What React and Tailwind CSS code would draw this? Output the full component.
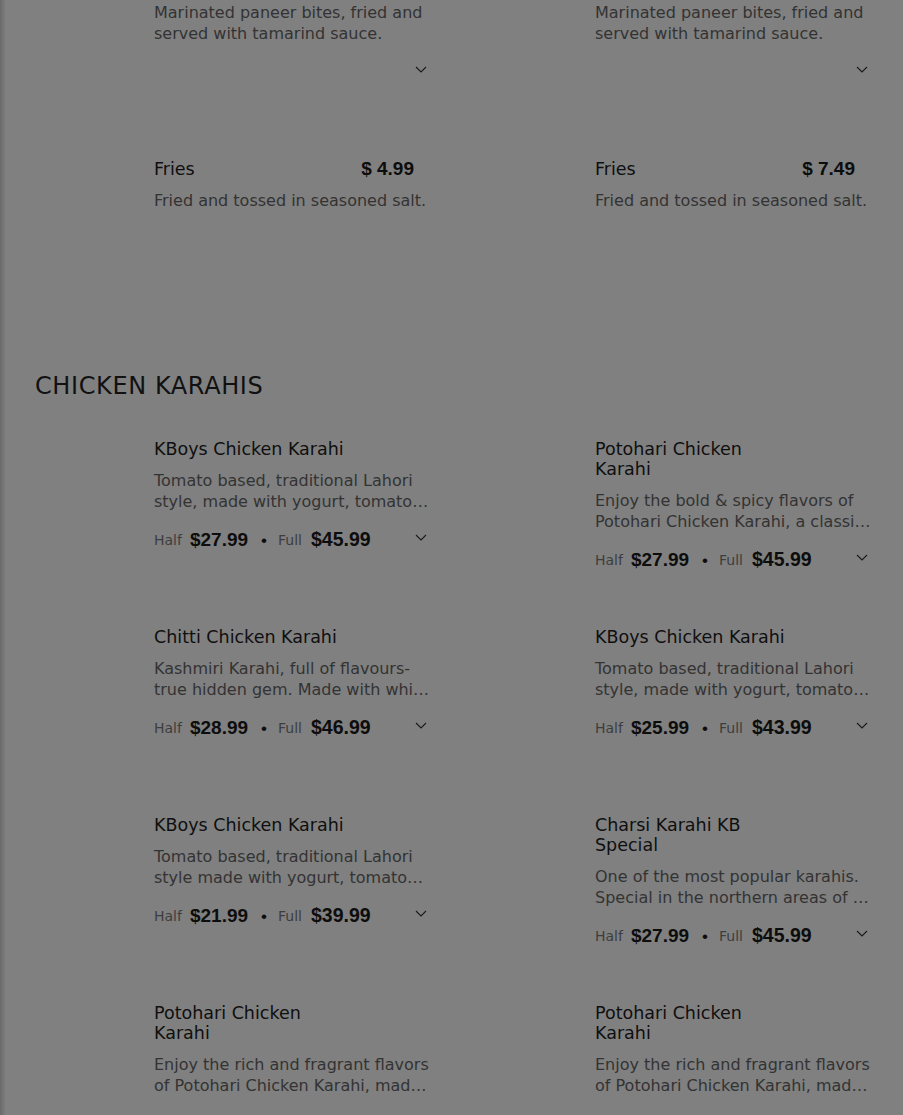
import React from 'react';

const font = { fontFamily: '"DejaVu Sans", "Noto Sans", sans-serif' };
const priceFont = { fontFamily: '"Liberation Sans", Arial, sans-serif' };

const karahis = [
  {
    name: 'KBoys Chicken Karahi',
    lines: ['Tomato based, traditional Lahori', 'style, made with yogurt, tomatoes, ginger and green chilies.'],
    half: '$27.99',
    full: '$45.99',
  },
  {
    name: 'Potohari Chicken Karahi',
    lines: ['Enjoy the bold & spicy flavors of', 'Potohari Chicken Karahi, a classic dish from the north.'],
    half: '$27.99',
    full: '$45.99',
  },
  {
    name: 'Chitti Chicken Karahi',
    lines: ['Kashmiri Karahi, full of flavours-', 'true hidden gem. Made with white pepper and cream.'],
    half: '$28.99',
    full: '$46.99',
  },
  {
    name: 'KBoys Chicken Karahi',
    lines: ['Tomato based, traditional Lahori', 'style, made with yogurt, tomatoes, ginger and green chilies.'],
    half: '$25.99',
    full: '$43.99',
  },
  {
    name: 'KBoys Chicken Karahi',
    lines: ['Tomato based, traditional Lahori', 'style made with yogurt, tomatoes, ginger and green chilies.'],
    half: '$21.99',
    full: '$39.99',
  },
  {
    name: 'Charsi Karahi KB Special',
    lines: ['One of the most popular karahis.', 'Special in the northern areas of Pakistan, cooked in lamb fat.'],
    half: '$27.99',
    full: '$45.99',
  },
  {
    name: 'Potohari Chicken Karahi',
    lines: ['Enjoy the rich and fragrant flavors', 'of Potohari Chicken Karahi, made with fresh spices.'],
    half: '$27.99',
    full: '$45.99',
  },
  {
    name: 'Potohari Chicken Karahi',
    lines: ['Enjoy the rich and fragrant flavors', 'of Potohari Chicken Karahi, made with fresh spices.'],
    half: '$27.99',
    full: '$45.99',
  },
];

const Chevron = () => (
  <svg width="12" height="7" viewBox="0 0 12 7" fill="none" className="shrink-0">
    <polyline points="1,1 6,6 11,1" stroke="#1a1a1a" strokeWidth="1.1" />
  </svg>
);

const Desc = ({ lines }) => (
  <div className="text-[16px] leading-[21px] text-[#333333] w-[276px]" style={font}>
    <div className="whitespace-nowrap">{lines[0]}</div>
    <div className="truncate">{lines[1]}</div>
  </div>
);

const PriceRow = ({ half, full }) => (
  <div className="flex items-center h-[24px] w-[276px] mt-[16px]">
    <span className="text-[14px] text-[#3d3d3d]" style={font}>Half</span>
    <span className="ml-[8px] text-[19px] font-bold text-[#0d0d0d]" style={priceFont}>{half}</span>
    <span className="ml-[13px] mr-[11px] text-[17px] leading-none text-[#0d0d0d]" style={priceFont}>•</span>
    <span className="text-[14px] text-[#3d3d3d]" style={font}>Full</span>
    <span className="ml-[9px] text-[19.5px] font-bold text-[#0d0d0d]" style={priceFont}>{full}</span>
    <div className="ml-auto -mt-[6px] pr-[3px]">
      <Chevron />
    </div>
  </div>
);

const Card = ({ children }) => (
  <div className="flex h-[188px]">
    <div className="w-[104px] shrink-0" />
    <div className="ml-[15px]">{children}</div>
  </div>
);

const Title = ({ name }) => (
  <div className="text-[17.5px] leading-[20px] font-medium text-[#0f0f0f] max-w-[200px] pt-[1px]" style={font}>
    {name}
  </div>
);

const KarahiCard = ({ item }) => (
  <Card>
    <Title name={item.name} />
    <div className="mt-[11px]">
      <Desc lines={item.lines} />
    </div>
    <PriceRow half={item.half} full={item.full} />
  </Card>
);

const FriesCard = ({ price }) => (
  <Card>
    <div className="flex justify-between items-center w-[260px] h-[20px] pt-[2px]">
      <span className="text-[17.5px] font-medium text-[#0f0f0f]" style={font}>Fries</span>
      <span className="text-[19px] font-bold text-[#0d0d0d]" style={priceFont}>{price}</span>
    </div>
    <div className="mt-[12px] text-[16px] leading-[21px] text-[#333333] whitespace-nowrap" style={font}>
      Fried and tossed in seasoned salt.
    </div>
  </Card>
);

const PaneerCard = () => (
  <Card>
    <Title name="Paneer Pakora" />
    <div className="mt-[11px]">
      <Desc lines={['Marinated paneer bites, fried and', 'served with tamarind sauce.']} />
    </div>
    <div className="flex items-center h-[24px] w-[276px] mt-[16px]">
      <div className="ml-auto -mt-[6px] pr-[3px]">
        <Chevron />
      </div>
    </div>
  </Card>
);

export default function App() {
  return (
    <div className="flex h-[1115px] w-[903px] overflow-hidden bg-[#808080]">
      <div className="w-[5px] shrink-0 bg-gradient-to-r from-[#6a6a6a] to-[#7c7c7c]" />
      <div className="flex-1 pl-[30px]">
        <div className="-mt-[30px] grid grid-cols-[441px_441px]">
          <PaneerCard />
          <PaneerCard />
          <FriesCard price="$ 4.99" />
          <FriesCard price="$ 7.49" />
        </div>
        <h2
          className="mt-[24px] mb-[36px] text-[24px] leading-[32px] text-[#111111] tracking-[0.6px]"
          style={font}
        >
          CHICKEN KARAHIS
        </h2>
        <div className="grid grid-cols-[441px_441px]">
          {karahis.map((item, i) => (
            <KarahiCard key={i} item={item} />
          ))}
        </div>
      </div>
      <div className="w-[2px] shrink-0 bg-[#6a6a6a]" />
      <div className="w-[2px] shrink-0 bg-[#d4d4d4]" />
      <div className="w-[11px] shrink-0 bg-[#c4c4c4]" />
    </div>
  );
}
